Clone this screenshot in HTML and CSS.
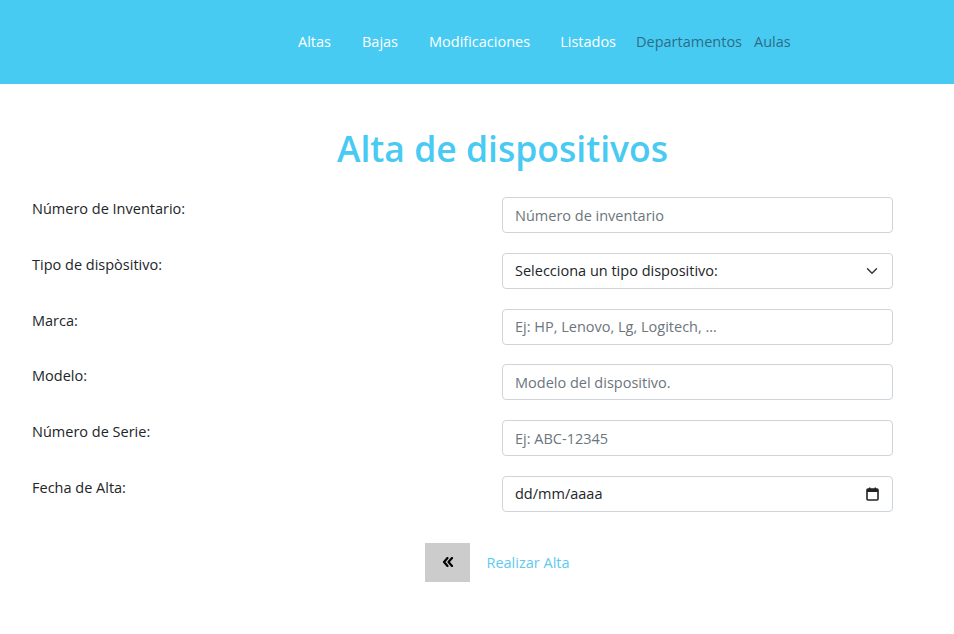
FILE: index.html
```
<!DOCTYPE html>
<html lang="es">
<head>
<meta charset="utf-8">
<title>Alta de dispositivos</title>
<link rel="stylesheet" href="styles.css">
</head>
<body>
<header class="topbar">
  <nav class="nav">
    <a class="nav-link light n-altas" href="#">Altas</a>
    <a class="nav-link light n-bajas" href="#">Bajas</a>
    <a class="nav-link light n-mod" href="#">Modificaciones</a>
    <a class="nav-link light n-list" href="#">Listados</a>
    <a class="nav-link dark n-dep" href="#">Departamentos</a>
    <a class="nav-link dark n-aulas" href="#">Aulas</a>
  </nav>
</header>
<main class="page">
  <h1 class="title">Alta de dispositivos</h1>
  <form class="form">
    <div class="row">
      <label class="label">Número de Inventario:</label>
      <input class="field" type="text" placeholder="Número de inventario">
    </div>
    <div class="row">
      <label class="label">Tipo de dispòsitivo:</label>
      <div class="field select">
        <span>Selecciona un tipo dispositivo:</span>
        <svg class="chev" width="12" height="12" viewBox="0 0 16 16"><path d="M2 5l6 6 6-6" fill="none" stroke="#343a40" stroke-width="2" stroke-linecap="round" stroke-linejoin="round"/></svg>
      </div>
    </div>
    <div class="row">
      <label class="label">Marca:</label>
      <input class="field" type="text" placeholder="Ej: HP, Lenovo, Lg, Logitech, ...">
    </div>
    <div class="row">
      <label class="label">Modelo:</label>
      <input class="field" type="text" placeholder="Modelo del dispositivo.">
    </div>
    <div class="row">
      <label class="label">Número de Serie:</label>
      <input class="field" type="text" placeholder="Ej: ABC-12345">
    </div>
    <div class="row">
      <label class="label">Fecha de Alta:</label>
      <div class="field select date">
        <span>dd/mm/aaaa</span>
        <svg class="cal" width="13" height="14" viewBox="0 0 13 14"><rect x="1" y="2" width="11" height="11" rx="1" fill="none" stroke="#222" stroke-width="1.6"/><rect x="1" y="2" width="11" height="3" fill="#222"/><rect x="3" y="0.5" width="1.5" height="2.5" fill="#222"/><rect x="8.5" y="0.5" width="1.5" height="2.5" fill="#222"/></svg>
      </div>
    </div>
    <div class="actions">
      <button class="back" type="button">
        <svg width="12" height="10" viewBox="0 0 12 10"><path d="M5.5 1L2 5l3.5 4M10 1L6.5 5 10 9" fill="none" stroke="#000" stroke-width="2.2" stroke-linecap="round" stroke-linejoin="round"/></svg>
      </button>
      <a class="submit" href="#">Realizar Alta</a>
    </div>
  </form>
</main>
</body>
</html>
```
FILE: styles.css
```
* { box-sizing: border-box; }
body {
  margin: 0;
  font-family: "Segoe UI", "Open Sans", "Noto Sans", sans-serif;
  color: #212529;
  background: #fff;
}
.topbar {
  height: 84px;
  background: #47cbf2;
  display: flex;
  align-items: center;
}
.nav {
  display: flex;
  align-items: center;
  padding-left: 298px;
  margin-top: -1px;
}
.nav-link {
  text-decoration: none;
  font-size: 14.5px;
  line-height: 20px;
}
.light { color: #fff; }
.dark { color: #2c6e86; }
.n-altas, .n-bajas { margin-right: 31px; }
.n-mod { margin-right: 30px; }
.n-list { margin-right: 20px; }
.n-dep { margin-right: 12px; }
.page {
  padding: 0 61px 0 32px;
}
.title {
  margin: 40px 0 25px;
  text-align: center;
  font-size: 35.5px;
  font-weight: 600;
  color: #48caf2;
  line-height: 48px;
  padding-left: 80px;
}
.form {
  display: flex;
  flex-direction: column;
  gap: 19.8px;
}
.row {
  display: grid;
  grid-template-columns: 1fr 391px;
  align-items: start;
  height: 36px;
}
.label {
  font-size: 14.5px;
  line-height: 20px;
  padding-top: 2px;
}
.field {
  height: 36px;
  border: 1px solid #ced4da;
  border-radius: 4px;
  padding: 0 12px;
  font-family: inherit;
  font-size: 14.5px;
  color: #212529;
  background: #fff;
  outline: none;
  width: 100%;
}
.field::placeholder { color: #6c757d; }
.select {
  display: flex;
  align-items: center;
  justify-content: space-between;
  padding-right: 14px;
}
.date { padding-right: 13px; }
.actions {
  display: flex;
  justify-content: center;
  align-items: center;
  gap: 16px;
  margin-top: 11px;
  padding-left: 70px;
}
.back {
  width: 45px;
  height: 39px;
  border: none;
  background: #cccccc;
  display: flex;
  align-items: center;
  justify-content: center;
  padding: 0;
}
.submit {
  color: #5ec9f0;
  text-decoration: none;
  font-size: 14.5px;
}
```
